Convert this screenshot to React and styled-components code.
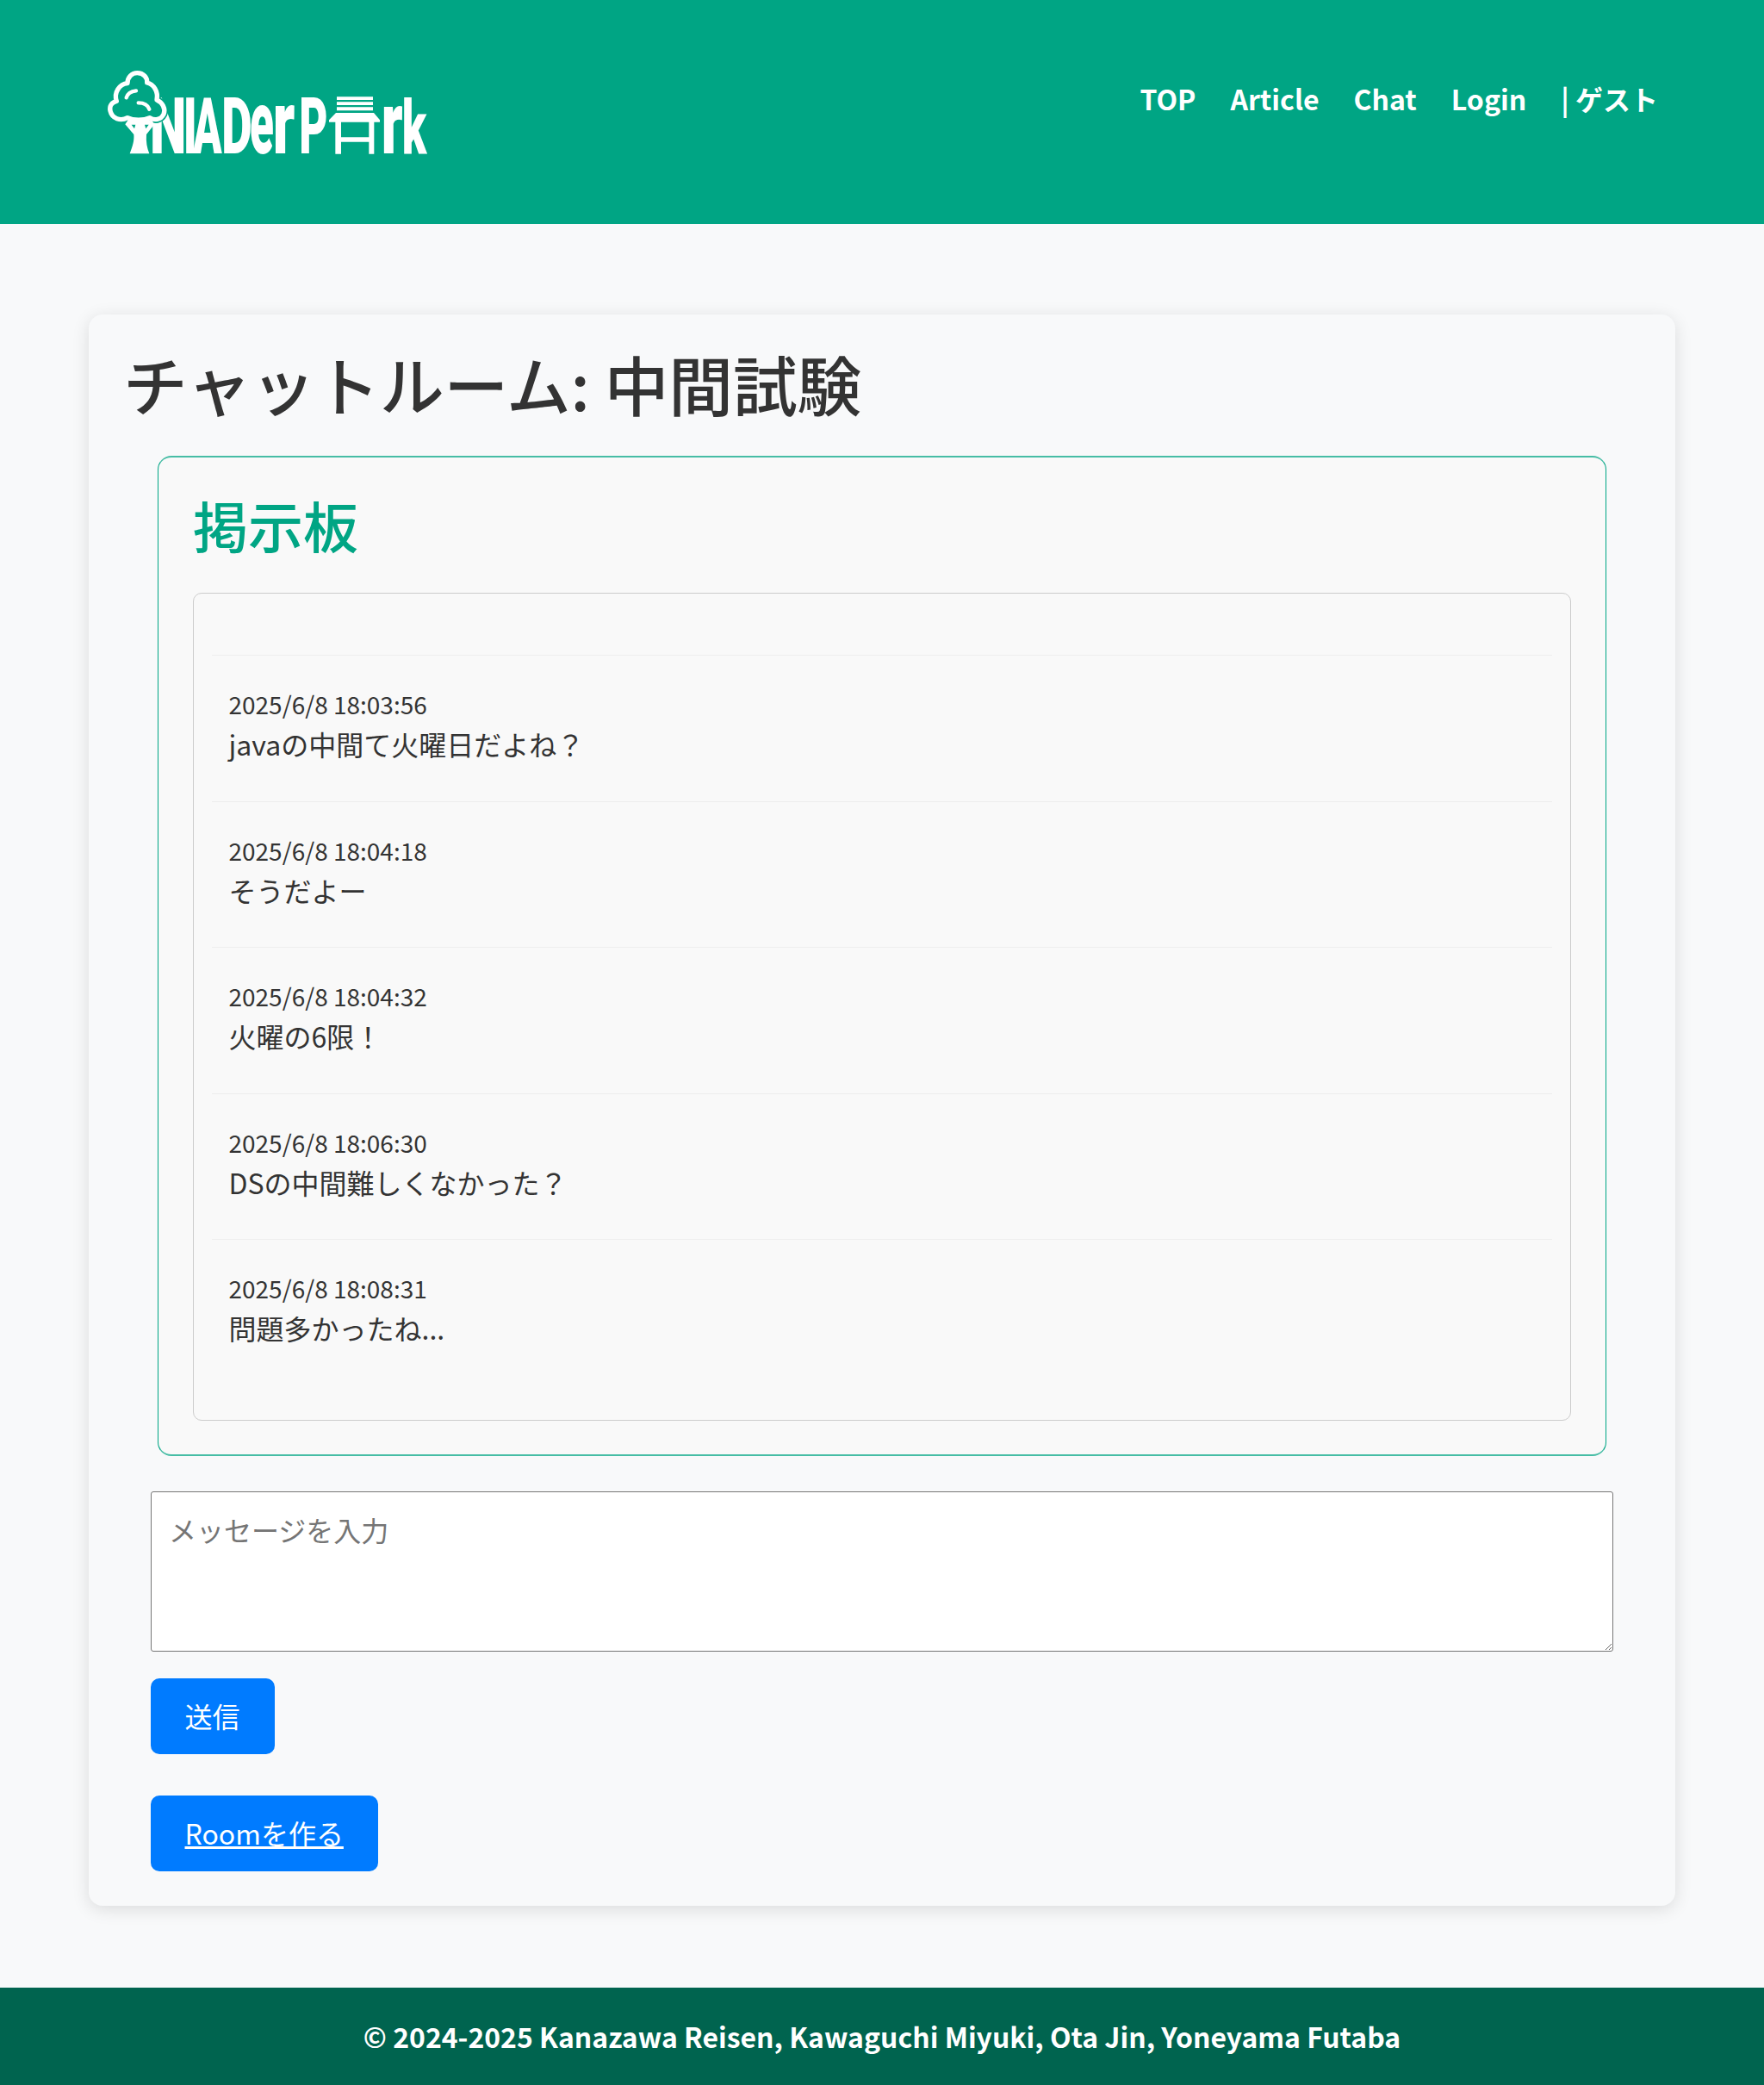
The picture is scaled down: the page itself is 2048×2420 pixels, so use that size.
import React from "react";
import styled, { createGlobalStyle } from "styled-components";

const Global = createGlobalStyle`
  html, body { margin: 0; padding: 0; }
  body {
    background: #f8f9fa;
    color: #333;
    font-family: "Noto Sans CJK JP", "Noto Sans", sans-serif;
    font-size: 32px;
    line-height: 1.5;
  }
`;

const Page = styled.div`
  width: 2048px;
  height: 2420px;
  display: flex;
  flex-direction: column;
`;
const Header = styled.header`
  height: 260px;
  flex: none;
  background: #00a584;
  display: flex;
  justify-content: space-between;
  align-items: flex-start;
  padding: 60px 123px 0 100px;
  box-sizing: border-box;
`;
const LogoSvg = styled.svg`
  width: 420px;
  height: 140px;
  display: block;
`;
const Nav = styled.nav`
  display: flex;
  gap: 40px;
  margin-top: 30px;
  font-weight: 700;
  color: #fff;
`;
const NavItem = styled.a`
  color: #fff;
  text-decoration: none;
`;
const Main = styled.main`
  flex: 1;
  padding: 105px 103px 0;
`;
const Card = styled.section`
  height: 1847px;
  box-sizing: border-box;
  border-radius: 16px;
  background: #f8f9fa;
  box-shadow: 0 4px 20px rgba(0, 0, 0, 0.12);
  padding: 40px;
`;
const Title = styled.h1`
  margin: -8px 0 36px;
  font-size: 74.67px;
  line-height: 96px;
  font-weight: 500;
  color: #333;
`;
const Board = styled.div`
  margin: 0 40px;
  border-style: solid;
  border-color: rgba(0, 165, 132, 0.72) #00a584;
  border-width: 2px 1px;
  border-radius: 16px;
  background: #f9f9f9;
  padding: 39px 40px;
  height: 1161px;
  box-sizing: border-box;
`;
const BoardTitle = styled.h2`
  margin: -2px 0 40px;
  font-size: 64px;
  line-height: 80px;
  font-weight: 500;
  color: #00a584;
`;
const MessageList = styled.div`
  height: 961px;
  box-sizing: border-box;
  border: 1px solid #ccc;
  border-radius: 10px;
  padding: 40px 21px;
`;
const Message = styled.div`
  border-bottom: ${(p) => (p.$last ? "none" : "1px solid #eee")};
  height: ${(p) => (p.$empty ? "32px" : "169.6px")};
  box-sizing: border-box;
  padding: ${(p) => (p.$empty ? "0" : "33px 19.5px 0")};
`;
const Stamp = styled.div`
  font-size: 28px;
  line-height: 46px;
  color: #333;
`;
const Body = styled.div`
  font-size: 32px;
  line-height: 46px;
  color: #333;
`;
const Composer = styled.form`
  margin: 41px 32px 0;
  display: flex;
  flex-direction: column;
  align-items: flex-start;
`;
const Input = styled.textarea`
  width: 100%;
  height: 186px;
  box-sizing: border-box;
  padding: 18.5px 20px;
  margin: 0 0 31px;
  font: inherit;
  line-height: 48px;
  background: #fff;
  color: #333;
  border: 1px solid #767676;
  border-radius: 3px;
  display: block;
`;
const Primary = styled.button`
  height: 88px;
  padding: 0 40px 2px 39.5px;
  border: none;
  border-radius: 10px;
  background: #007bff;
  color: #fff;
  font: inherit;
  text-decoration: ${(p) => (p.$link ? "underline" : "none")};
  margin-bottom: ${(p) => (p.$link ? "0" : "48px")};
`;
const Footer = styled.footer`
  height: 113px;
  flex: none;
  background: #00644f;
  color: #fff;
  font-weight: 700;
  font-size: 31.95px;
  display: flex;
  align-items: center;
  justify-content: center;
`;

const LogoText = styled.text`
  font-family: "Roboto", sans-serif;
  font-weight: 900;
  font-size: 274px;
  fill: #fff;
`;

const CLOUD =
  "M84 182 C60 195 30 185 24 158 C20 140 30 128 46 124 C36 95 55 65 84 62 C84 40 100 26 118 26 C140 26 154 42 152 60 C175 65 192 90 186 120 C205 128 218 150 210 170 C200 190 178 192 162 182 C140 192 105 192 84 182 Z";

const GLYPHS = [
  ["N", 222, 0.66, 1],
  ["I", 338, 0.58, 1],
  ["A", 372, 0.54, 1],
  ["D", 472, 0.6, 1],
  ["e", 570, 0.56, 1.13],
  ["r", 650, 0.74, 1.13],
  ["P", 742, 0.56, 1],
  ["r", 1028, 0.72, 1.12],
  ["k", 1100, 0.57, 0.95],
];

function Logo() {
  return (
    <LogoSvg viewBox="0 0 1260 420" aria-label="NIADer Park">
      {GLYPHS.map(([ch, x, sx, sy]) => (
        <LogoText key={x} transform={`translate(${x} 355) scale(${sx} ${sy})`}>{ch}</LogoText>
      ))}
      <g transform="translate(60 48)">
        <path d={CLOUD} fill="#00a584" stroke="#00a584" strokeWidth="26" strokeLinejoin="round" />
        <path d={CLOUD} fill="none" stroke="#fff" strokeWidth="16" strokeLinejoin="round" />
        <path d="M80 112 C84 98 98 90 114 88 M122 130 C140 130 155 138 160 152" fill="none" stroke="#fff" strokeWidth="13" strokeLinecap="round" />
        <path
          fillRule="evenodd"
          d="M92 307 C102 280 108 262 106 240 L76 205 L86 190 H168 L178 205 L150 240 C148 265 152 288 160 307 Z M98 206 L108 220 L112 206 Z M144 206 L148 220 L158 206 Z"
          fill="#fff"
        />
      </g>
      <path d="M873 157H999V168H873Z M873 175H999V186H873Z M873 193H999V205H873Z M870 213H1002L1023 238V245H1003V356H985V314H888V356H868V245H846V238Z M888 245V298H985V245Z" fill="#fff" fillRule="evenodd" />
    </LogoSvg>
  );
}

const messages = [
  ["2025/6/8 18:03:56", "javaの中間て火曜日だよね？"],
  ["2025/6/8 18:04:18", "そうだよー"],
  ["2025/6/8 18:04:32", "火曜の6限！"],
  ["2025/6/8 18:06:30", "DSの中間難しくなかった？"],
  ["2025/6/8 18:08:31", "問題多かったね..."],
];

export default function App() {
  return (
    <>
      <Global />
      <Page>
        <Header>
          <Logo />
          <Nav>
            <NavItem>TOP</NavItem>
            <NavItem>Article</NavItem>
            <NavItem>Chat</NavItem>
            <NavItem>Login</NavItem>
            <NavItem>| ゲスト</NavItem>
          </Nav>
        </Header>
        <Main>
          <Card>
            <Title>チャットルーム: 中間試験</Title>
            <Board>
              <BoardTitle>掲示板</BoardTitle>
              <MessageList>
                <Message $empty />
                {messages.map(([t, m], i) => (
                  <Message key={t} $last={i === messages.length - 1}>
                    <Stamp>{t}</Stamp>
                    <Body>{m}</Body>
                  </Message>
                ))}
              </MessageList>
            </Board>
            <Composer onSubmit={(e) => e.preventDefault()}>
              <Input placeholder="メッセージを入力" />
              <Primary type="button">送信</Primary>
              <Primary type="button" $link>Roomを作る</Primary>
            </Composer>
          </Card>
        </Main>
        <Footer>© 2024-2025 Kanazawa Reisen, Kawaguchi Miyuki, Ota Jin, Yoneyama Futaba</Footer>
      </Page>
    </>
  );
}
